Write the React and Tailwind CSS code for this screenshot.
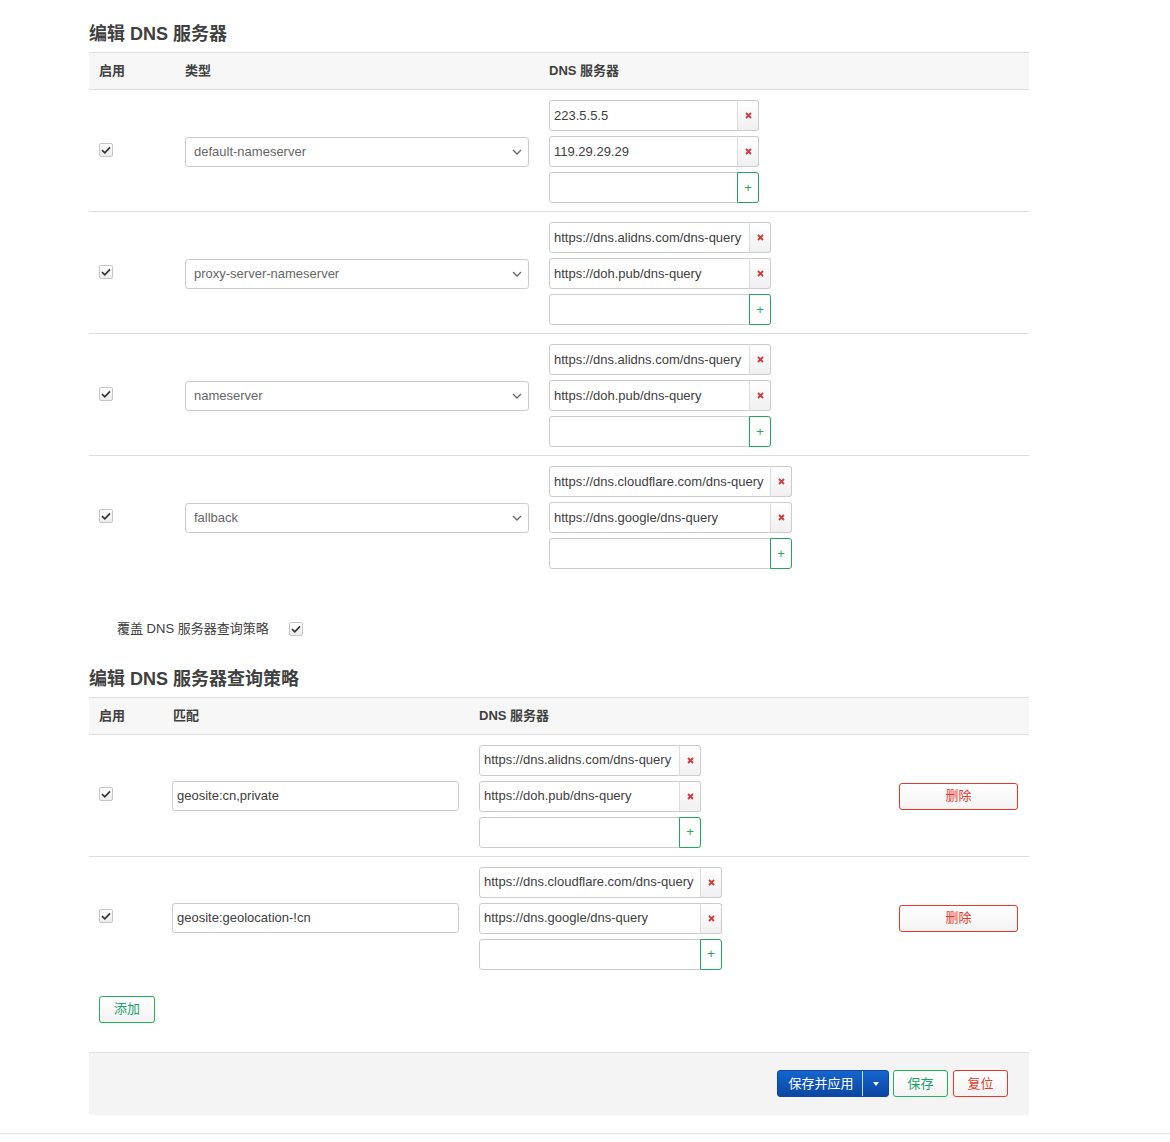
import React from 'react'

const font = { fontFamily: '"Liberation Sans", "Noto Sans CJK SC", sans-serif' }

function Check() {
  return (
    <span className="inline-flex w-[14px] h-[14px] items-center justify-center border border-[#c6c6c6] rounded-[2px] bg-gradient-to-b from-white to-[#ececec]">
      <svg width="10" height="8" viewBox="0 0 10 8">
        <path d="M1 4.2 L3.8 6.8 L9 1.4" fill="none" stroke="#333" strokeWidth="1.7" />
      </svg>
    </span>
  )
}

function ValueInput({ value, width, plus }) {
  return (
    <div className="flex h-[31px]">
      <div
        className="h-full border border-[#ccc] rounded-l-[3px] px-[4px] flex items-center text-[13px] text-[#404040] bg-white"
        style={{ width }}
      >
        {value}
      </div>
      {plus ? (
        <div className="w-[22px] h-full border border-[#1fa85a] rounded-r-[3px] flex items-center justify-center text-[#1fa85a] text-[13px] bg-white -ml-px">
          +
        </div>
      ) : (
        <div className="w-[22px] h-full border border-[#ccc] border-l-[#ddd] rounded-r-[3px] flex items-center justify-center bg-gradient-to-b from-white to-[#f0f0f0] -ml-px">
          <svg width="7" height="7" viewBox="0 0 7 7">
            <path d="M1 1 L6 6 M6 1 L1 6" stroke="#d9383a" strokeWidth="1.8" />
          </svg>
        </div>
      )}
    </div>
  )
}

function ServerList({ values, width }) {
  return (
    <div className="flex flex-col gap-[5px]">
      {values.map(v => (
        <ValueInput key={v} value={v} width={width} />
      ))}
      <ValueInput value="" width={width} plus />
    </div>
  )
}

function Select({ value }) {
  return (
    <div className="w-[344px] h-[30px] border border-[#ccc] rounded-[3px] flex items-center justify-between pl-[8px] pr-[6px] text-[13px] text-[#666] bg-white">
      <span>{value}</span>
      <svg width="10" height="6" viewBox="0 0 10 6">
        <path d="M1 1 L5 5 L9 1" fill="none" stroke="#666" strokeWidth="1.3" />
      </svg>
    </div>
  )
}

const servers = [
  { type: 'default-nameserver', values: ['223.5.5.5', '119.29.29.29'], width: 189 },
  { type: 'proxy-server-nameserver', values: ['https://dns.alidns.com/dns-query', 'https://doh.pub/dns-query'], width: 201 },
  { type: 'nameserver', values: ['https://dns.alidns.com/dns-query', 'https://doh.pub/dns-query'], width: 201 },
  { type: 'fallback', values: ['https://dns.cloudflare.com/dns-query', 'https://dns.google/dns-query'], width: 222 },
]

const policies = [
  { match: 'geosite:cn,private', values: ['https://dns.alidns.com/dns-query', 'https://doh.pub/dns-query'], width: 201 },
  { match: 'geosite:geolocation-!cn', values: ['https://dns.cloudflare.com/dns-query', 'https://dns.google/dns-query'], width: 222 },
]

function BtnOutline({ children, color, className = '' }) {
  return (
    <button
      className={`h-[27px] rounded-[3px] border bg-gradient-to-b from-white to-[#f3f3f3] text-[13px] flex items-center justify-center ${className}`}
      style={{ borderColor: color, color }}
    >
      {children}
    </button>
  )
}

export default function App() {
  return (
    <div className="w-[1170px] min-h-[1142px] bg-white text-[#404040]" style={font}>
      <div className="ml-[89px] w-[940px] pt-[24px]">
        {/* 编辑 DNS 服务器 */}
        <h2 className="text-[18px] leading-[20px] font-bold text-[#404040] mb-[8px]">编辑 DNS 服务器</h2>
        <div className="border-t border-[#ddd]">
          <div className="flex h-[37px] items-center bg-[#f7f7f7] border-b border-[#ddd] text-[13px] font-bold">
            <div className="w-[96px] pl-[10px]">启用</div>
            <div className="w-[364px]">类型</div>
            <div>DNS 服务器</div>
          </div>
          {servers.map((s, i) => (
            <div
              key={s.type}
              className={`flex items-center pt-[10px] pb-[8px] ${i < servers.length - 1 ? 'border-b border-[#ddd]' : ''}`}
            >
              <div className="w-[96px] pl-[10px] flex -mt-[4px]"><Check /></div>
              <div className="w-[364px]"><Select value={s.type} /></div>
              <ServerList values={s.values} width={s.width} />
            </div>
          ))}
        </div>

        {/* 覆盖 */}
        <div className="flex items-center mt-[42px] pl-[28px] text-[13px] text-[#404040]">
          <span className="w-[172px]">覆盖 DNS 服务器查询策略</span>
          <Check />
        </div>

        {/* 编辑 DNS 服务器查询策略 */}
        <h2 className="text-[18px] leading-[20px] font-bold text-[#404040] mt-[30px] mb-[8px]">编辑 DNS 服务器查询策略</h2>
        <div className="border-t border-[#ddd]">
          <div className="flex h-[37px] items-center bg-[#f7f7f7] border-b border-[#ddd] text-[13px] font-bold">
            <div className="w-[84px] pl-[10px]">启用</div>
            <div className="w-[306px]">匹配</div>
            <div>DNS 服务器</div>
          </div>
          {policies.map((p, i) => (
            <div
              key={p.match}
              className={`flex items-center pt-[10px] pb-[8px] ${i < policies.length - 1 ? 'border-b border-[#ddd]' : ''}`}
            >
              <div className="w-[83px] pl-[10px] flex -mt-[4px]"><Check /></div>
              <div className="w-[307px]">
                <div className="w-[287px] h-[30px] border border-[#ccc] rounded-[3px] flex items-center px-[4px] text-[13px] text-[#404040]">
                  {p.match}
                </div>
              </div>
              <div className="flex-1"><ServerList values={p.values} width={p.width} /></div>
              <BtnOutline color="#e8382c" className="w-[119px] mr-[11px]">删除</BtnOutline>
            </div>
          ))}
        </div>

        <div className="pl-[10px] mt-[18px]">
          <BtnOutline color="#1fb35a" className="w-[56px]">
            <span className="text-[#1aa36a]">添加</span>
          </BtnOutline>
        </div>

        {/* footer */}
        <div className="mt-[29px] h-[63px] bg-[#f4f4f4] border-t border-[#e2e2e2] rounded-b-[3px] flex items-center justify-end gap-[4px] pr-[21px]">
          <div className="h-[27px] w-[112px] rounded-[3px] flex text-white text-[13px] bg-gradient-to-b from-[#1565cf] to-[#0b47a3] border border-[#0b47a3]">
            <div className="flex-1 flex items-center justify-center border-r border-white/80 pl-[2px]">保存并应用</div>
            <div className="w-[25px] flex items-center justify-center">
              <svg width="6" height="4" viewBox="0 0 6 4"><path d="M0 0 H6 L3 4 Z" fill="#fff" /></svg>
            </div>
          </div>
          <BtnOutline color="#1fb35a" className="w-[55px]">
            <span className="text-[#1aa36a]">保存</span>
          </BtnOutline>
          <BtnOutline color="#e8382c" className="w-[55px] ml-px">复位</BtnOutline>
        </div>
      </div>
      <div className="mt-[18px] border-t border-[#e3e3e3]" />
    </div>
  )
}
